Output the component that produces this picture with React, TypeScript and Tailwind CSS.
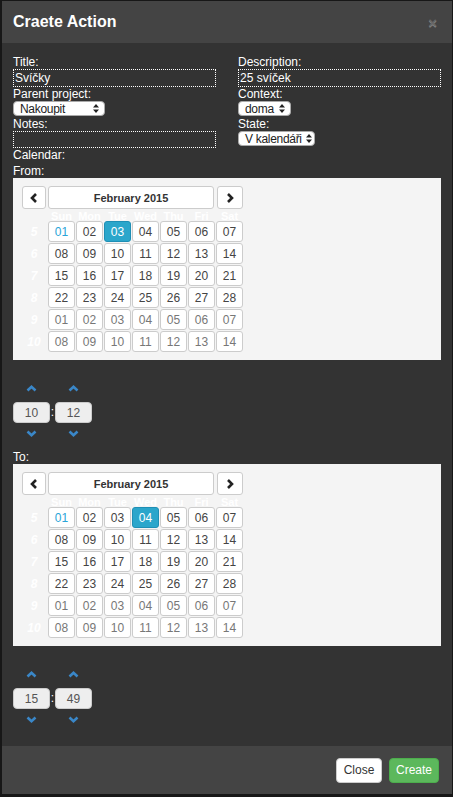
const weeks = [
  { n: 5, days: ["01", "02", "03", "04", "05", "06", "07"] },
  { n: 6, days: ["08", "09", "10", "11", "12", "13", "14"] },
  { n: 7, days: ["15", "16", "17", "18", "19", "20", "21"] },
  { n: 8, days: ["22", "23", "24", "25", "26", "27", "28"] },
  { n: 9, days: ["01", "02", "03", "04", "05", "06", "07"] },
  { n: 10, days: ["08", "09", "10", "11", "12", "13", "14"] },
];
const dayNames = ["Sun", "Mon", "Tue", "Wed", "Thu", "Fri", "Sat"];

function SelectArrows() {
  return (
    <svg width="6" height="9" viewBox="0 0 6 9" className="shrink-0">
      <path d="M3 0 L6 3.5 L0 3.5 Z M3 9 L6 5.5 L0 5.5 Z" fill="#222" />
    </svg>
  );
}

function FakeSelect({ value, width }: { value: string; width: string }) {
  return (
    <div
      className={`${width} flex h-[15px] items-center justify-between gap-[4px] overflow-hidden whitespace-nowrap rounded-[4px] border border-[#aaa] bg-white pl-[6px] pr-[5px] text-[12px] leading-none text-[#222]`}
    >
      <span className="tracking-[-0.3px]">{value}</span>
      <SelectArrows />
    </div>
  );
}

function Chevron({ dir }: { dir: "left" | "right" }) {
  return (
    <svg width="8" height="10" viewBox="0 0 8 10">
      <polyline
        points={dir === "left" ? "6,1 2,5 6,9" : "2,1 6,5 2,9"}
        fill="none"
        stroke="#222"
        strokeWidth="2.6"
      />
    </svg>
  );
}

function Calendar({ selected }: { selected: number }) {
  return (
    <div className="h-[182px] bg-[#f4f4f4] pl-2 pt-2">
      <div className="flex h-[23px] w-[222px] gap-[2px] pl-px">
        <button className="flex w-[24px] items-center justify-center rounded-[3px] border border-[#ccc] bg-white">
          <Chevron dir="left" />
        </button>
        <button className="w-[167px] rounded-[3px] border border-[#ccc] bg-white text-[11px] font-bold text-[#333]">
          February 2015
        </button>
        <button className="ml-px flex w-[26px] items-center justify-center rounded-[3px] border border-[#ccc] bg-white">
          <Chevron dir="right" />
        </button>
      </div>
      <div className="mt-[2px] grid h-[10px] grid-cols-[26px_repeat(7,27px)] gap-x-px text-[11px] font-bold leading-[10px] text-white">
        <span />
        {dayNames.map((d) => (
          <span key={d} className="text-center">
            {d}
          </span>
        ))}
      </div>
      <div className="grid grid-cols-[26px_repeat(7,27px)] gap-px">
        {weeks.map((w, wi) => (
          <>
            <span
              key={`w${w.n}`}
              className="flex h-[21px] items-center justify-center text-[12px] font-bold italic text-white"
            >
              {w.n}
            </span>
            {w.days.map((d, di) => {
              const isSel = wi === 0 && di === selected;
              const isToday = wi === 0 && di === 0;
              const other = wi >= 4;
              return (
                <button
                  key={`${w.n}-${di}`}
                  className={
                    isSel
                      ? "h-[21px] rounded-[3px] border border-[#1f8fb5] bg-[#2ba6cb] text-[12px] text-white"
                      : isToday
                        ? "h-[21px] rounded-[3px] border border-[#ccc] bg-white text-[12px] text-[#2aa5d8]"
                        : other
                          ? "h-[21px] rounded-[3px] border border-[#ccc] bg-white text-[12px] text-[#777]"
                          : "h-[21px] rounded-[3px] border border-[#ccc] bg-white text-[12px] text-[#444]"
                  }
                >
                  {d}
                </button>
              );
            })}
          </>
        ))}
      </div>
    </div>
  );
}

function BlueChevron({ up }: { up?: boolean }) {
  return (
    <svg width="11" height="7" viewBox="0 0 11 7">
      <polyline
        points={up ? "1.5,5.5 5.5,1.8 9.5,5.5" : "1.5,1.5 5.5,5.2 9.5,1.5"}
        fill="none"
        stroke="#3a87c8"
        strokeWidth="2.6"
      />
    </svg>
  );
}

function TimeField({ value }: { value: string }) {
  return (
    <div className="flex w-[37px] flex-col items-center">
      <div className="flex h-[12px] items-center">
        <BlueChevron up />
      </div>
      <div className="mt-2 flex h-[21px] w-[37px] items-center justify-center rounded-[4px] border border-[#ccc] bg-[#eee] text-[12px] text-[#555]">
        {value}
      </div>
      <div className="mt-[4px] flex h-[12px] items-center">
        <BlueChevron />
      </div>
    </div>
  );
}

function TimePicker({ h, m }: { h: string; m: string }) {
  return (
    <div className="mt-[22px] flex items-start">
      <TimeField value={h} />
      <span className="mt-[20px] w-[5px] text-center text-[12px] leading-[21px] text-white">:</span>
      <TimeField value={m} />
    </div>
  );
}

export default function App() {
  return (
    <div className="h-[797px] w-[453px] bg-[#171717] pb-[3px] pl-[2px] pr-px pt-px [font-family:'Liberation_Sans',Arial,sans-serif]">
      <div className="flex h-full flex-col bg-[#333]">
        <div className="flex h-[42px] shrink-0 items-center justify-between bg-[#444] pl-[11px] pr-[15px]">
          <h4 className="text-[16px] font-bold text-white">Craete Action</h4>
          <span className="text-[15px] font-bold leading-none text-[#666] [text-shadow:0_1px_0_#888]">×</span>
        </div>

        <div className="flex-1 px-[11px] pt-3 text-[12px] leading-[14px] text-white">
          <div className="grid grid-cols-2 gap-x-[22px]">
            <div className="flex flex-col">
              <label>Title:</label>
              <div className="h-[18px] border border-dotted border-white px-px leading-[16px]">Svíčky</div>
              <label>Parent project:</label>
              <FakeSelect value="Nakoupit" width="w-[92px]" />
              <label className="mt-px">Notes:</label>
              <div className="h-[17px] border border-dotted border-white" />
            </div>
            <div className="flex flex-col">
              <label>Description:</label>
              <div className="h-[18px] border border-dotted border-white px-px leading-[16px]">25 svíček</div>
              <label>Context:</label>
              <FakeSelect value="doma" width="w-[53px]" />
              <label className="mt-px">State:</label>
              <FakeSelect value="V kalendáři" width="w-[77px]" />
            </div>
          </div>
          <div>Calendar:</div>
          <div className="mt-[2px]">From:</div>
          <Calendar selected={2} />
          <TimePicker h="10" m="12" />
          <div className="mt-[11px]">To:</div>
          <Calendar selected={3} />
          <TimePicker h="15" m="49" />
        </div>

        <div className="flex h-[48px] shrink-0 items-center justify-end gap-[7px] bg-[#444] pr-[13px]">
          <button className="h-[25px] w-[46px] rounded-[4px] border border-[#ccc] bg-white text-[12px] text-[#333]">
            Close
          </button>
          <button className="h-[25px] w-[50px] rounded-[4px] border border-[#4cae4c] bg-[#5cb85c] text-[12px] text-white">
            Create
          </button>
        </div>
      </div>
    </div>
  );
}
